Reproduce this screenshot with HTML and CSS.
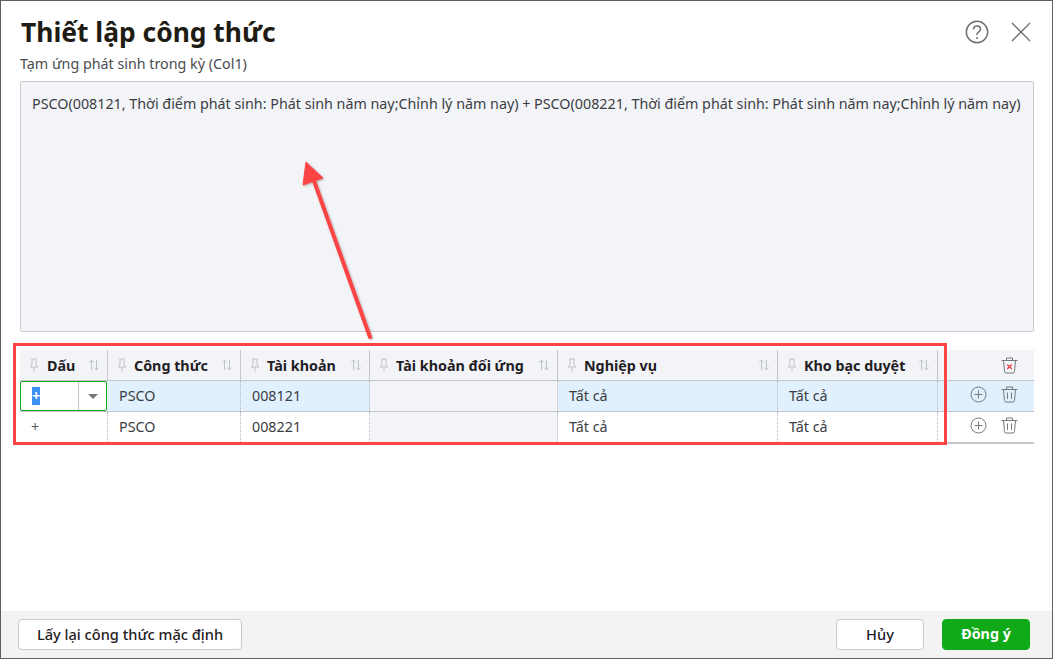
FILE: index.html
```html
<!DOCTYPE html>
<html lang="vi">
<head>
<meta charset="utf-8">
<title>Thiết lập công thức</title>
<link rel="stylesheet" href="styles.css">
</head>
<body>
<svg class="defs" width="0" height="0">
  <defs>
    <symbol id="pin" viewBox="0 0 10 14"><path d="M2.500 1h5M3 1v6L1 9h8L7 7V1M5 9v4.500" fill="none" stroke="#bfc2c9" stroke-width="1"/></symbol>
    <symbol id="sort" viewBox="0 0 12 12"><path d="M3.500 11V1.200M1 3.600l2.500-2.500L6 3.600M8.500 1v9.800M6 8.400l2.500 2.500 2.500-2.500" fill="none" stroke="#bfc2c9" stroke-width="1"/></symbol>
    <symbol id="add" viewBox="0 0 17 17"><circle cx="8.500" cy="8.500" r="7.500" fill="none" stroke="#77797d" stroke-width="1"/><path d="M4.500 8.500h8M8.500 4.500v8" stroke="#77797d" stroke-width="1"/></symbol>
    <symbol id="trash" viewBox="0 0 17 17"><path d="M0.500 3.500h16M5.500 3.500V1h6v2.500M2.500 3.500l1 11q.1 1.500 1.500 1.500h7q1.400 0 1.500-1.500l1-11M6.500 6.500v6.500M10.500 6.500v6.500" fill="none" stroke="#77797d" stroke-width="1"/></symbol>
  </defs>
</svg>
<main class="dialog">
  <header class="head">
    <h1 class="title">Thiết lập công thức</h1>
    <div class="head-icons">
      <svg class="icon-help" viewBox="0 0 24 24" width="24" height="24"><circle cx="12" cy="12" r="10.700" fill="none" stroke="#6c6e72" stroke-width="1.500"/><path d="M8.500 9.500q0-3.500 3.500-3.500t3.500 3.200q0 1.800-2 3t-1.500 2.800" fill="none" stroke="#6c6e72" stroke-width="1.500"/><circle cx="12" cy="18" r="1" fill="#6c6e72"/></svg>
      <svg class="icon-close" viewBox="0 0 20 20" width="20" height="20"><path d="M1 1l18 18M19 1L1 19" stroke="#6c6e72" stroke-width="1.300" fill="none"/></svg>
    </div>
  </header>
  <div class="sub">Tạm ứng phát sinh trong kỳ (Col1)</div>
  <div class="formula">PSCO(008121, Thời điểm phát sinh: Phát sinh năm nay;Chỉnh lý năm nay) + PSCO(008221, Thời điểm phát sinh: Phát sinh năm nay;Chỉnh lý năm nay)</div>

  <section class="grid">
    <div class="row row-head">
      <div class="hc"><svg class="pin"><use href="#pin"/></svg><span class="hl">Dấu</span><svg class="sort"><use href="#sort"/></svg></div>
      <div class="hc"><svg class="pin"><use href="#pin"/></svg><span class="hl">Công thức</span><svg class="sort"><use href="#sort"/></svg></div>
      <div class="hc"><svg class="pin"><use href="#pin"/></svg><span class="hl">Tài khoản</span><svg class="sort"><use href="#sort"/></svg></div>
      <div class="hc"><svg class="pin"><use href="#pin"/></svg><span class="hl">Tài khoản đối ứng</span><svg class="sort"><use href="#sort"/></svg></div>
      <div class="hc"><svg class="pin"><use href="#pin"/></svg><span class="hl">Nghiệp vụ</span><svg class="sort"><use href="#sort"/></svg></div>
      <div class="hc"><svg class="pin"><use href="#pin"/></svg><span class="hl">Kho bạc duyệt</span><svg class="sort"><use href="#sort"/></svg></div>
      <div class="hc hc-act">
        <svg class="trash-all" viewBox="0 0 17 17" width="17" height="17"><path d="M0.500 3.500h16M5.500 3.500V1h6v2.500M2.500 3.500l1 11q.1 1.500 1.500 1.500h7q1.400 0 1.500-1.500l1-11" fill="none" stroke="#77797d" stroke-width="1"/><path d="M6.200 7.500l4.600 4.600M10.800 7.500l-4.600 4.600" stroke="#e8434a" stroke-width="1.400"/></svg>
      </div>
    </div>
    <div class="row row-sel">
      <div class="c c-edit">
        <div class="combo"><span class="combo-val"><span class="selected">+</span></span><span class="combo-btn"><i class="caret"></i></span></div>
      </div>
      <div class="c">PSCO</div>
      <div class="c">008121</div>
      <div class="c c-ro"></div>
      <div class="c">Tất cả</div>
      <div class="c">Tất cả</div>
      <div class="c c-act"><svg class="act"><use href="#add"/></svg><svg class="act"><use href="#trash"/></svg></div>
    </div>
    <div class="row row-last">
      <div class="c c-sign">+</div>
      <div class="c">PSCO</div>
      <div class="c">008221</div>
      <div class="c c-ro"></div>
      <div class="c">Tất cả</div>
      <div class="c">Tất cả</div>
      <div class="c c-act"><svg class="act"><use href="#add"/></svg><svg class="act"><use href="#trash"/></svg></div>
    </div>
  </section>

  <footer class="foot">
    <button class="btn btn-reset">Lấy lại công thức mặc định</button>
    <div class="foot-right">
      <button class="btn btn-cancel">Hủy</button>
      <button class="btn btn-ok">Đồng ý</button>
    </div>
  </footer>

  <div class="mark-box"></div>
  <svg class="mark-arrow" viewBox="0 0 1053 659" width="1053" height="659">
    <defs><filter id="sh" x="-20%" y="-20%" width="140%" height="140%"><feDropShadow dx="1" dy="1" stdDeviation="1" flood-color="#000" flood-opacity=".3"/></filter></defs>
    <g filter="url(#sh)">
      <path d="M370 337L313 178" stroke="#fb4545" stroke-width="4" stroke-linecap="round" fill="none"/>
      <path d="M306 162L323 178L303 185Z" fill="#fb4545" stroke="#fb4545" stroke-width="1"/>
    </g>
  </svg>
</main>
</body>
</html>
```
FILE: styles.css
```css
* { box-sizing: border-box; }
html, body { margin: 0; padding: 0; }
body { background: #fff; font-family: "Noto Sans", "Open Sans", sans-serif; font-size: 14.3px; color: #33353a; }
.defs { position: absolute; }
.dialog { position: relative; width: 1053px; height: 659px; border: 1px solid #5e5e5e; display: flex; flex-direction: column; background: #fff; overflow: hidden; }
.head { display: flex; justify-content: space-between; align-items: flex-start; padding: 13px 21px 0 20px; height: 52px; }
.title { margin: 0; font-size: 26.4px; line-height: 36px; font-weight: 700; color: #1f1c14; }
.head-icons { display: flex; align-items: center; gap: 22px; padding-top: 6px; }
.sub { margin: 0 0 0 19px; height: 28px; line-height: 20px; padding-top: 1px; color: #4a4c50; }
.formula { margin: 0 18px 0 19px; height: 251px; background: #f3f4f8; border: 1px solid #c9cad0; border-radius: 2px; padding: 11px 11px; line-height: 22px; color: #3b3d42; white-space: nowrap; }
.grid { margin: 18px 18px 0 19px; border-bottom: 2px solid #c5c6cc; }
.row { display: grid; grid-template-columns: 88px 133px 129px 188px 220px 160px 96px; height: 31px; border-bottom: 1px solid #c5c6cc; }
.row-head { height: 31px; background: #f3f4f8; }
.row-sel { background: #e0f0fd; }
.row-last { height: 30px; border-bottom: 0; }
.hc { display: flex; align-items: center; padding: 0 7px 0 9px; border-right: 1px solid #c5c6cc; }
.hc-act { justify-content: flex-end; border-right: 0; padding-right: 16px; }
.pin { width: 10px; height: 14px; flex: none; margin-right: 7px; }
.hc:first-child .pin { margin-right: 8px; }
.hl { flex: 1; font-weight: 700; color: #1f2024; white-space: nowrap; }
.sort { width: 12px; height: 12px; flex: none; }
.c { display: flex; align-items: center; padding: 0 11px 2px; border-right: 1px dotted #b4b6bc; color: #3b3d42; }
.c-ro { background: #f3f4f8; }
.c-sign { padding-left: 11px; color: #55575c; }
.c-edit { padding: 0; border-right: 1px dotted transparent; }
.c-act { justify-content: flex-end; gap: 14px; padding: 0 16px 4px 0; border-right: 0; }
.combo { width: 87px; height: 30px; border: 1px solid #12a51e; border-radius: 2px; background: #fff; display: flex; flex: none; }
.combo-val { flex: 1; display: flex; align-items: center; padding-left: 11px; }
.selected { background: #3d8ff5; color: #fff; width: 8px; height: 18px; line-height: 18px; display: block; text-align: center; font-weight: 700; }
.combo-btn { width: 28px; border-left: 1px solid #c5c6cc; display: flex; align-items: center; justify-content: center; }
.caret { width: 0; height: 0; border-left: 5px solid transparent; border-right: 5px solid transparent; border-top: 5px solid #77797d; }
.act { width: 17px; height: 17px; flex: none; }
.foot { margin-top: auto; height: 47px; background: #f3f3f4; display: flex; align-items: flex-start; justify-content: space-between; padding: 8px 22px 0 17px; }
.foot-right { display: flex; gap: 18px; }
.btn { height: 31px; border-radius: 4px; font-family: inherit; font-size: 14.6px; font-weight: 500; padding: 0 0 2px; cursor: pointer; }
.btn-reset { width: 224px; background: #fff; border: 1px solid #c9cad0; color: #1f2024; }
.btn-cancel { width: 88px; background: #fff; border: 1px solid #c9cad0; color: #1f2024; }
.btn-ok { width: 88px; background: #10aa19; border: 1px solid #10aa19; color: #fff; font-weight: 700; font-size: 14.3px; }
.mark-box { position: absolute; left: 12px; top: 342px; width: 934px; height: 102px; border: 3px solid #fb4545; pointer-events: none; }
.mark-arrow { position: absolute; left: -1px; top: -1px; pointer-events: none; }
```
